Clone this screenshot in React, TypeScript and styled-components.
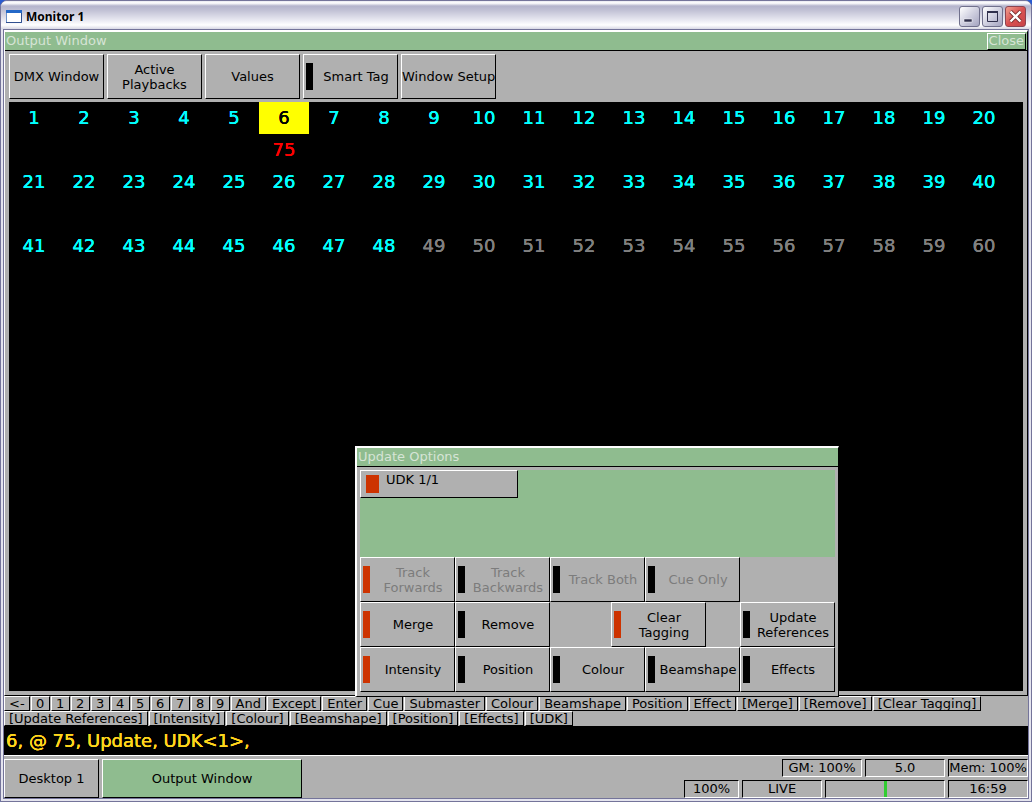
import React from "react";
import styled, { createGlobalStyle, css } from "styled-components";

const GREY = "#b0b0b0";
const GREEN = "#8fbc8f";
const RED = "#cd3300";

const GlobalStyle = createGlobalStyle`
  * { box-sizing: border-box; }
  html, body, #root { height: 100%; }
  body {
    margin: 0;
    background: #2a5bd0;
    font: 13px/15px "DejaVu Sans", Verdana, sans-serif;
    color: #000;
  }
  button, input { font: inherit; color: inherit; }
`;

const raised = css`
  border: 1px solid #000;
  border-top-color: #fff;
  border-left-color: #fff;
`;

const sunken = css`
  border: 1px solid #fff;
  border-top-color: #000;
  border-left-color: #000;
`;

/* Large readouts are painted twice so their strokes stay solid on black. */
const readout = css`
  font-size: 18px;
  text-shadow: 0 0 0 currentColor, 0 0 0 currentColor;
`;

const Frame = styled.div`
  display: flex;
  flex-direction: column;
  min-height: 100%;
  padding: 0 2px 2px;
  background: #e4e4ee;
  border: 1px solid #74749a;
  border-radius: 7px 7px 0 0;
`;

const TitleBar = styled.header`
  display: flex;
  align-items: center;
  gap: 4px;
  height: 28px;
  margin: 0 -2px;
  padding: 3px 5px 0 5px;
  border-radius: 6px 6px 0 0;
  background: linear-gradient(#e8e8f0 0, #fff 2px, #b4b4cc 5px, #c0c0d4 9px, #e4e4ee 18px, #fff 24px, #d8d8e4 28px);
`;

const TitleText = styled.h1`
  flex: 1;
  margin: 0;
  font: 700 12px/18px "Noto Sans", Tahoma, sans-serif;
`;

const CaptionButtons = styled.div`
  display: flex;
  gap: 2px;
`;

const CaptionButton = styled.button<{ $danger?: boolean }>`
  width: 21px;
  height: 21px;
  padding: 0;
  border: 1px solid ${(p) => (p.$danger ? "#8c4450" : "#70708c")};
  border-radius: 3px;
  background: ${(p) =>
    p.$danger
      ? "linear-gradient(135deg, #f0a090, #d85050 50%, #c84448)"
      : "linear-gradient(135deg, #fff, #d0d0e0 50%, #a4a4c0)"};
  svg { display: block; }
`;

const Client = styled.main`
  flex: 1;
  display: flex;
  flex-direction: column;
  border: 1px solid #74749a;
  background: ${GREY};
`;

const OutputPanel = styled.section`
  flex: 1;
  display: flex;
  flex-direction: column;
  border: 1px solid #000;
  border-top: 2px solid #fff;
  border-left-color: #fff;
`;

const PanelHeader = styled.div`
  display: flex;
  justify-content: space-between;
  align-items: center;
  height: 19px;
  padding-left: 1px;
  background: ${GREEN};
  border-bottom: 1px solid #000;
  color: #d6e4d6;
  line-height: 16px;
`;

const PanelTitle = styled.h2`
  margin: 0;
  font: inherit;
`;

const CloseButton = styled.button`
  height: 17px;
  padding: 0 1px;
  margin-right: 1px;
  background: ${GREEN};
  line-height: 14px;
  ${raised}
`;

const Toolbar = styled.nav`
  display: flex;
  gap: 3px;
  padding: 3px 4px;
`;

const KeyButton = styled.button`
  display: flex;
  align-items: center;
  width: 95px;
  height: 45px;
  padding: 0;
  background: ${GREY};
  line-height: 15px;
  ${raised}
  &:disabled { color: #7c7c7c; }
`;

const Lamp = styled.span<{ $on?: boolean }>`
  flex: none;
  width: 7px;
  height: 27px;
  margin: 0 2px;
  background: ${(p) => (p.$on ? RED : "#000")};
`;

const KeyLabel = styled.span`
  flex: 1;
  text-align: center;
  white-space: pre;
`;

const Stage = styled.div`
  flex: 1;
  min-height: 320px;
  margin: 0 4px 4px;
  padding-right: 14px;
  background: #000;
`;

const ChannelGrid = styled.div`
  display: grid;
  grid-template-columns: repeat(20, 1fr);
  line-height: 32px;
  text-align: center;
`;

const Channel = styled.div<{ $patched: boolean }>`
  height: 64px;
  color: ${(p) => (p.$patched ? "#00ffff" : "#808080")};
`;

const ChannelNumber = styled.div<{ $selected: boolean }>`
  ${readout}
  ${(p) => p.$selected && "background: #ffff00; color: #000;"}
`;

const ChannelLevel = styled.div`
  ${readout}
  color: #ff0000;
`;

const Dialog = styled.section`
  position: absolute;
  right: 193px;
  bottom: 105px;
  width: 484px;
  background: ${GREY};
  border: 1px solid #000;
  border-top: 2px solid #fff;
  border-left: 2px solid #fff;
`;

const DialogBody = styled.div`
  padding: 3px 3px 4px;
`;

const TargetList = styled.div`
  height: 87px;
  background: ${GREEN};
`;

const Target = styled.button`
  display: flex;
  align-items: flex-start;
  gap: 7px;
  width: 158px;
  height: 28px;
  padding: 1px 5px;
  background: ${GREY};
  ${raised}
`;

const TargetLamp = styled.span`
  width: 13px;
  height: 18px;
  margin-top: 3px;
  background: ${RED};
`;

const KeyRow = styled.div`
  display: flex;
`;

const Spacer = styled.span<{ $width: number }>`
  width: ${(p) => p.$width}px;
`;

const HistoryRow = styled.div`
  display: flex;
  height: 15px;
  gap: 1px;
`;

const Token = styled.button`
  min-width: 19px;
  height: 15px;
  padding: 0 4px;
  background: ${GREY};
  line-height: 13px;
  white-space: nowrap;
  ${raised}
`;

const CommandLine = styled.input`
  width: 100%;
  height: 30px;
  padding: 0 2px;
  border: 0;
  border-bottom: 1px solid #fff;
  border-radius: 0;
  outline: 0;
  background: #000;
  && { color: #ffd61c; ${readout} }
`;

const TaskBar = styled.footer`
  display: flex;
  gap: 3px;
  height: 42px;
  padding: 3px 0 0;
`;

const TaskButton = styled.button<{ $active?: boolean }>`
  width: ${(p) => (p.$active ? 200 : 95)}px;
  height: 39px;
  padding: 0;
  background: ${(p) => (p.$active ? GREEN : GREY)};
  ${raised}
`;

const Status = styled.div`
  display: flex;
  flex-direction: column;
  gap: 3px;
  margin-left: auto;
`;

const StatusRow = styled.div`
  display: flex;
  justify-content: flex-end;
  gap: 3px;
`;

const StatusCell = styled.div<{ $width: number }>`
  width: ${(p) => p.$width}px;
  height: 18px;
  line-height: 16px;
  text-align: center;
  white-space: nowrap;
  ${sunken}
`;

const Beat = styled.div`
  width: 3px;
  height: 16px;
  margin: 0 auto;
  background: #32cd32;
`;

type KeyProps = { label: string; lamp?: "on" | "off"; disabled?: boolean };

function Key({ label, lamp, disabled }: KeyProps) {
  return (
    <KeyButton disabled={disabled}>
      {lamp && <Lamp $on={lamp === "on"} />}
      <KeyLabel>{label}</KeyLabel>
    </KeyButton>
  );
}

const channels = Array.from({ length: 60 }, (_, i) => i + 1);
const levels: Record<number, number> = { 6: 75 };

const tokens = [
  ["<-", "0", "1", "2", "3", "4", "5", "6", "7", "8", "9", "And", "Except", "Enter", "Cue", "Submaster", "Colour", "Beamshape", "Position", "Effect", "[Merge]", "[Remove]", "[Clear Tagging]"],
  ["[Update References]", "[Intensity]", "[Colour]", "[Beamshape]", "[Position]", "[Effects]", "[UDK]"],
];

export default function App() {
  return (
    <>
      <GlobalStyle />
      <Frame>
        <TitleBar>
          <svg width="16" height="14" viewBox="0 0 16 14" aria-hidden="true">
            <rect x="0.5" y="0.5" width="15" height="12" fill="#fff" stroke="#6a8fc8" />
            <rect width="16" height="3" fill="#2468c8" />
            <path d="M15.5 3V12.5H0" fill="none" stroke="#305090" />
          </svg>
          <TitleText>Monitor 1</TitleText>
          <CaptionButtons>
            <CaptionButton aria-label="Minimize">
              <svg width="19" height="19" viewBox="0 0 19 19">
                <rect x="4" y="12" width="8" height="3" fill="#30304c" stroke="#fff" strokeWidth="0.5" />
              </svg>
            </CaptionButton>
            <CaptionButton aria-label="Maximize">
              <svg width="19" height="19" viewBox="0 0 19 19">
                <path d="M4.5 5V14.5H14.5V5" fill="none" stroke="#30304c" />
                <rect x="4" y="4" width="11" height="2" fill="#30304c" />
              </svg>
            </CaptionButton>
            <CaptionButton $danger aria-label="Close window">
              <svg width="19" height="19" viewBox="0 0 19 19">
                <path d="M4.5 4.5L14.5 14.5M14.5 4.5L4.5 14.5" stroke="#702828" strokeWidth="4" />
                <path d="M4.5 4.5L14.5 14.5M14.5 4.5L4.5 14.5" stroke="#fff" strokeWidth="2.4" />
              </svg>
            </CaptionButton>
          </CaptionButtons>
        </TitleBar>
        <Client>
          <OutputPanel>
            <PanelHeader>
              <PanelTitle>Output Window</PanelTitle>
              <CloseButton>Close</CloseButton>
            </PanelHeader>
            <Toolbar>
              <Key label="DMX Window" />
              <Key label={"Active\nPlaybacks"} />
              <Key label="Values" />
              <Key label="Smart Tag" lamp="off" />
              <Key label="Window Setup" />
            </Toolbar>
            <Stage>
              <ChannelGrid>
                {channels.map((n) => (
                  <Channel key={n} $patched={n <= 48}>
                    <ChannelNumber $selected={n in levels}>{n}</ChannelNumber>
                    {n in levels && <ChannelLevel>{levels[n]}</ChannelLevel>}
                  </Channel>
                ))}
              </ChannelGrid>
            </Stage>
          </OutputPanel>
          <div>
            {tokens.map((row, i) => (
              <HistoryRow key={i}>
                {row.map((t) => (
                  <Token key={t}>{t}</Token>
                ))}
              </HistoryRow>
            ))}
          </div>
          <CommandLine aria-label="Command line" defaultValue="6, @ 75, Update, UDK<1>," />
          <TaskBar>
            <TaskButton>Desktop 1</TaskButton>
            <TaskButton $active>Output Window</TaskButton>
            <Status>
              <StatusRow>
                <StatusCell $width={80}>GM: 100%</StatusCell>
                <StatusCell $width={80}>5.0</StatusCell>
                <StatusCell $width={80}>Mem: 100%</StatusCell>
              </StatusRow>
              <StatusRow>
                <StatusCell $width={55}>100%</StatusCell>
                <StatusCell $width={80}>LIVE</StatusCell>
                <StatusCell $width={120}>
                  <Beat />
                </StatusCell>
                <StatusCell $width={80}>16:59</StatusCell>
              </StatusRow>
            </Status>
          </TaskBar>
        </Client>
        <Dialog role="dialog" aria-label="Update Options">
          <PanelHeader>
            <PanelTitle>Update Options</PanelTitle>
          </PanelHeader>
          <DialogBody>
            <TargetList>
              <Target>
                <TargetLamp />
                UDK 1/1
              </Target>
            </TargetList>
            <KeyRow>
              <Key label={"Track\nForwards"} lamp="on" disabled />
              <Key label={"Track\nBackwards"} lamp="off" disabled />
              <Key label="Track Both" lamp="off" disabled />
              <Key label="Cue Only" lamp="off" disabled />
            </KeyRow>
            <KeyRow>
              <Key label="Merge" lamp="on" />
              <Key label="Remove" lamp="off" />
              <Spacer $width={61} />
              <Key label={"Clear\nTagging"} lamp="on" />
              <Spacer $width={34} />
              <Key label={"Update\nReferences"} lamp="off" />
            </KeyRow>
            <KeyRow>
              <Key label="Intensity" lamp="on" />
              <Key label="Position" lamp="off" />
              <Key label="Colour" lamp="off" />
              <Key label="Beamshape" lamp="off" />
              <Key label="Effects" lamp="off" />
            </KeyRow>
          </DialogBody>
        </Dialog>
      </Frame>
    </>
  );
}
